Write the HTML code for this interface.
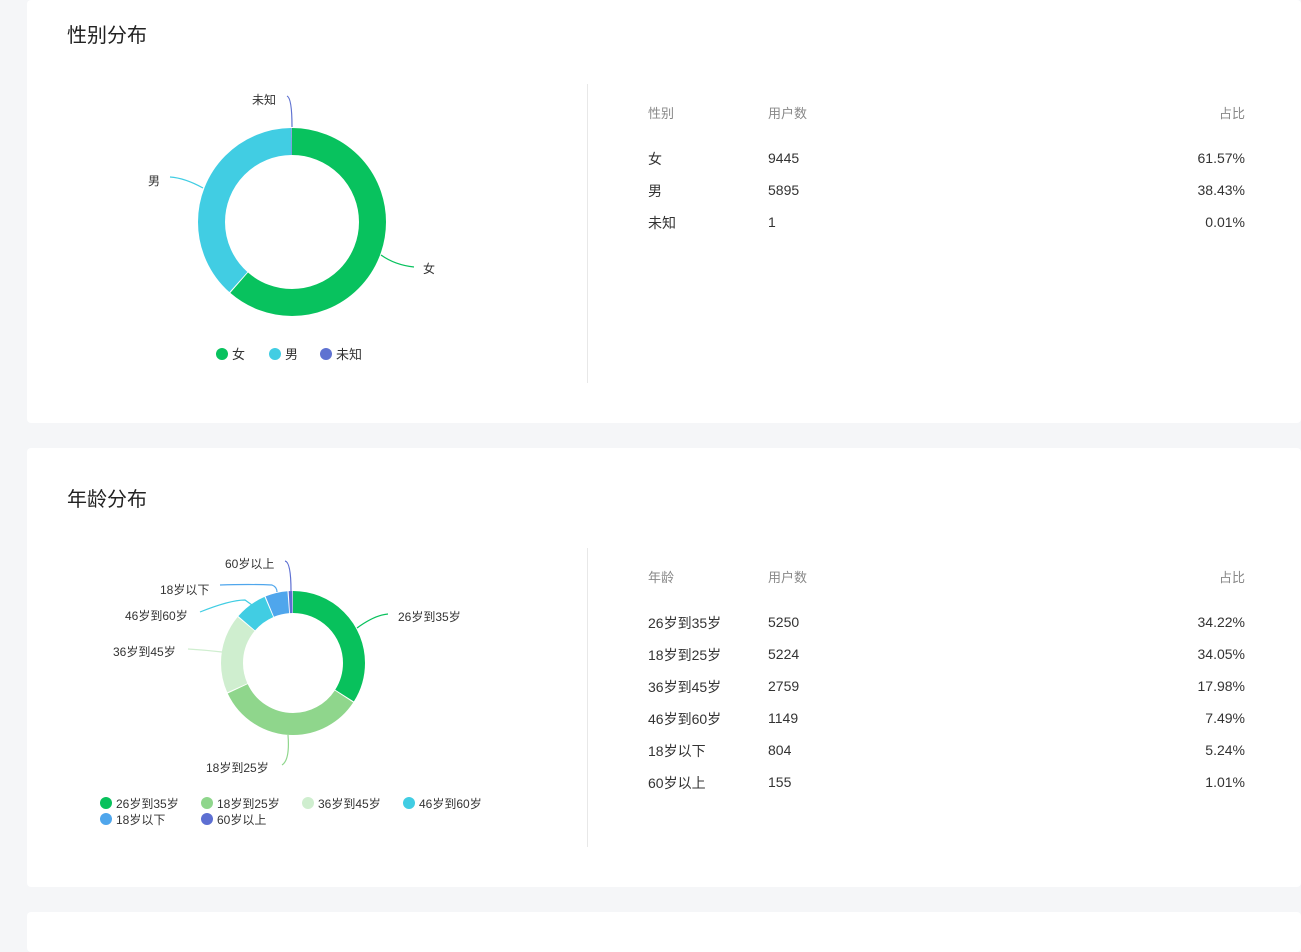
<!DOCTYPE html><html><head><meta charset="utf-8"><style>
body{margin:0;width:1301px;height:934px;background:#f5f6f8;font-family:"Liberation Sans","Noto Sans CJK SC",sans-serif;position:relative;overflow:hidden;color:#333}
.card{position:absolute;left:27px;right:0;background:#fff;border-radius:4px}
.t{position:absolute;left:40px;font-size:20px;color:#222}
.div{position:absolute;left:560px;width:1px;background:#e8e8e8}
.tb{position:absolute;left:621px;width:597px;font-size:14px}
.tb div{position:absolute;left:0;right:0;height:20px;line-height:20px}
.tb span{position:absolute;top:1px}
.tb span.n{top:0}
.h{color:#888;font-size:13px}
.lab{position:absolute;font-size:12px;color:#333;white-space:nowrap}
.lg{position:absolute;font-size:13px;white-space:nowrap}
.dot{display:inline-block;width:12px;height:12px;border-radius:50%;vertical-align:-1px;margin-right:4px}
</style></head><body>
<div class="card" style="top:0;height:423px">
<div class="t" style="top:19px">性别分布</div>
<div class="div" style="top:84px;height:299px"></div>
<div class="tb" style="top:0">
<div class="h" style="top:103px"><span style="left:0">性别</span><span style="left:120px">用户数</span><span style="right:0">占比</span></div>
<div style="top:148px"><span style="left:0">女</span><span class="n" style="left:120px">9445</span><span class="n" style="right:0">61.57%</span></div>
<div style="top:180px"><span style="left:0">男</span><span class="n" style="left:120px">5895</span><span class="n" style="right:0">38.43%</span></div>
<div style="top:212px"><span style="left:0">未知</span><span class="n" style="left:120px">1</span><span class="n" style="right:0">0.01%</span></div>
</div>
</div>
<div class="card" style="top:448px;height:439px">
<div class="t" style="top:35px">年龄分布</div>
<div class="div" style="top:100px;height:299px"></div>
<div class="tb" style="top:0">
<div class="h" style="top:119px"><span style="left:0">年龄</span><span style="left:120px">用户数</span><span style="right:0">占比</span></div>
<div style="top:164px"><span style="left:0">26岁到35岁</span><span class="n" style="left:120px">5250</span><span class="n" style="right:0">34.22%</span></div>
<div style="top:196px"><span style="left:0">18岁到25岁</span><span class="n" style="left:120px">5224</span><span class="n" style="right:0">34.05%</span></div>
<div style="top:228px"><span style="left:0">36岁到45岁</span><span class="n" style="left:120px">2759</span><span class="n" style="right:0">17.98%</span></div>
<div style="top:260px"><span style="left:0">46岁到60岁</span><span class="n" style="left:120px">1149</span><span class="n" style="right:0">7.49%</span></div>
<div style="top:292px"><span style="left:0">18岁以下</span><span class="n" style="left:120px">804</span><span class="n" style="right:0">5.24%</span></div>
<div style="top:324px"><span style="left:0">60岁以上</span><span class="n" style="left:120px">155</span><span class="n" style="right:0">1.01%</span></div>
</div>
</div>
<div class="card" style="top:912px;height:40px"></div>

<svg style="position:absolute;left:0;top:0" width="1301" height="934">
<g transform="rotate(-90 292 222)" fill="none" stroke-width="27">
<circle cx="292" cy="222" r="80.5" stroke="#08c25e" stroke-dasharray="310.4 505.8"/>
<circle cx="292" cy="222" r="80.5" stroke="#41cde3" stroke-dasharray="0 311.4 193.4 505.8"/>
<circle cx="292" cy="222" r="80.5" stroke="#5f72d1" stroke-dasharray="0 505 0.8 505.8"/>
</g>
<g fill="none" stroke-width="1.2">
<path d="M287 96 Q292 98 292 127" stroke="#5f72d1"/>
<path d="M170 177 Q185 178 203 188" stroke="#41cde3"/>
<path d="M381 255 Q395 265 414 267" stroke="#08c25e"/>
</g>
<g transform="rotate(-90 293 663)" fill="none" stroke-width="22">
<circle cx="293" cy="663" r="61" stroke="#08c15c" stroke-dasharray="130.2 383.3"/>
<circle cx="293" cy="663" r="61" stroke="#8fd68c" stroke-dasharray="0 131.2 129.5 383.3"/>
<circle cx="293" cy="663" r="61" stroke="#cfeecf" stroke-dasharray="0 261.7 67.9 383.3"/>
<circle cx="293" cy="663" r="61" stroke="#41cde3" stroke-dasharray="0 330.6 27.7 383.3"/>
<circle cx="293" cy="663" r="61" stroke="#4fa6ec" stroke-dasharray="0 359.3 19.1 383.3"/>
<circle cx="293" cy="663" r="61" stroke="#5d6fd2" stroke-dasharray="0 379.4 3.2 383.3"/>
</g>
<g fill="none" stroke-width="1.2">
<path d="M357 628 Q375 615 388 614" stroke="#08c15c"/>
<path d="M288 735 Q290 760 282 765" stroke="#8fd68c"/>
<path d="M188 649 Q205 650 222 652" stroke="#cfeecf"/>
<path d="M200 612 Q230 600 245 600 L252 605" stroke="#41cde3"/>
<path d="M220 585 Q250 584 272 585 Q277 587 277 592" stroke="#4fa6ec"/>
<path d="M285 561 Q291 562 291 591" stroke="#5d6fd2"/>
</g>
</svg>
<div class="lab" style="left:252px;top:91px">未知</div>
<div class="lab" style="left:148px;top:172px">男</div>
<div class="lab" style="left:423px;top:260px">女</div>
<div class="lg" style="left:216px;top:344px"><span class="dot" style="background:#08c25e"></span>女</div>
<div class="lg" style="left:269px;top:344px"><span class="dot" style="background:#41cde3"></span>男</div>
<div class="lg" style="left:320px;top:344px"><span class="dot" style="background:#5f72d1"></span>未知</div>
<div class="lab" style="left:225px;top:555px">60岁以上</div>
<div class="lab" style="left:160px;top:581px">18岁以下</div>
<div class="lab" style="left:125px;top:607px">46岁到60岁</div>
<div class="lab" style="left:113px;top:643px">36岁到45岁</div>
<div class="lab" style="left:398px;top:608px">26岁到35岁</div>
<div class="lab" style="left:206px;top:759px">18岁到25岁</div>
<div class="lg" style="left:100px;top:795px;font-size:12px"><span class="dot" style="background:#08c15c"></span>26岁到35岁</div>
<div class="lg" style="left:201px;top:795px;font-size:12px"><span class="dot" style="background:#8fd68c"></span>18岁到25岁</div>
<div class="lg" style="left:302px;top:795px;font-size:12px"><span class="dot" style="background:#cfeecf"></span>36岁到45岁</div>
<div class="lg" style="left:403px;top:795px;font-size:12px"><span class="dot" style="background:#41cde3"></span>46岁到60岁</div>
<div class="lg" style="left:100px;top:811px;font-size:12px"><span class="dot" style="background:#4fa6ec"></span>18岁以下</div>
<div class="lg" style="left:201px;top:811px;font-size:12px"><span class="dot" style="background:#5d6fd2"></span>60岁以上</div>
</body></html>
